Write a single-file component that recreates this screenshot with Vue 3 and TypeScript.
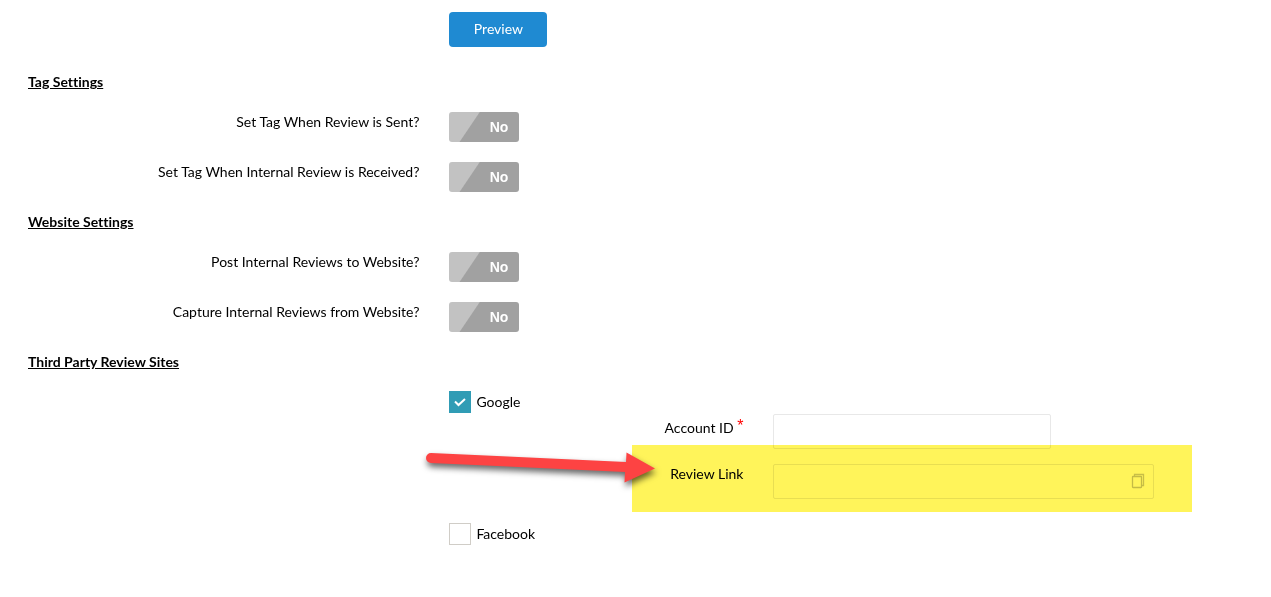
<script setup lang="ts">
import { reactive, ref } from 'vue'

interface ToggleRow {
  id: string
  label: string
  on: boolean
}

interface Section {
  title: string
  rows: ToggleRow[]
}

const sections = reactive<Section[]>([
  {
    title: 'Tag Settings',
    rows: [
      { id: 'tag-sent', label: 'Set Tag When Review is Sent?', on: false },
      { id: 'tag-received', label: 'Set Tag When Internal Review is Received?', on: false },
    ],
  },
  {
    title: 'Website Settings',
    rows: [
      { id: 'post-reviews', label: 'Post Internal Reviews to Website?', on: false },
      { id: 'capture-reviews', label: 'Capture Internal Reviews from Website?', on: false },
    ],
  },
])

const google = ref(true)
const facebook = ref(false)
const accountId = ref('')
const reviewLink = ref('')
</script>

<template>
  <form class="settings" @submit.prevent>
    <div class="row">
      <button type="button" class="preview">Preview</button>
    </div>

    <section v-for="section in sections" :key="section.title">
      <h2 class="heading">{{ section.title }}</h2>
      <div v-for="row in section.rows" :key="row.id" class="row">
        <label class="row-label" :for="row.id">{{ row.label }}</label>
        <span class="toggle" :class="{ on: row.on }">
          <input :id="row.id" v-model="row.on" type="checkbox" role="switch" />
          <span class="toggle-text" aria-hidden="true">{{ row.on ? 'Yes' : 'No' }}</span>
        </span>
      </div>
    </section>

    <section>
      <h2 class="heading">Third Party Review Sites</h2>
      <div class="sites">
        <label class="check">
          <span class="box">
            <input v-model="google" type="checkbox" />
            <svg v-if="google" viewBox="0 0 22 22" aria-hidden="true">
              <path d="M6 10.500l3.500 3.500L16 8" fill="none" stroke="#fff" stroke-width="2" />
            </svg>
          </span>
          Google
        </label>

        <div v-if="google" class="fields">
          <div class="field">
            <label class="field-label required" for="account">Account ID <sup>*</sup></label>
            <input id="account" v-model="accountId" class="text account" type="text" required />
          </div>
          <div class="field">
            <label class="field-label" for="link">Review Link</label>
            <div class="link-box">
              <input id="link" v-model="reviewLink" class="text" type="text" />
              <button type="button" class="copy" aria-label="Copy">
                <svg width="14" height="16" viewBox="0 0 14 16" aria-hidden="true">
                  <path d="M3.500 3V1.500H12.500V12.500H10.500" fill="none" stroke="#c8c8c8" stroke-width="1.300" />
                  <rect x="1.500" y="3.500" width="9" height="11" rx="0.500" fill="none" stroke="#c4c4c4" stroke-width="1.300" />
                </svg>
              </button>
            </div>
            <div class="highlight"></div>
            <svg class="arrow" width="240" height="50" viewBox="0 0 240 50" aria-hidden="true">
              <path
                d="M11 8L206 17L206.500 7.500L235 23.500L204.500 37.500L205 27L11 18A5 5 0 0 1 11 8Z"
                fill="#fd4343"
              />
            </svg>
          </div>
        </div>

        <label class="check">
          <span class="box">
            <input v-model="facebook" type="checkbox" />
            <svg v-if="facebook" viewBox="0 0 22 22" aria-hidden="true">
              <path d="M6 10.500l3.500 3.500L16 8" fill="none" stroke="#fff" stroke-width="2" />
            </svg>
          </span>
          Facebook
        </label>
      </div>
    </section>
  </form>
</template>

<style>
body {
  background: #fff;
}
</style>

<style scoped>
.settings {
  padding: 12px 0 52px;
  font-family: Lato, sans-serif;
  font-size: 14px;
  font-variant-ligatures: none;
  line-height: 20px;
  color: #000;
}

.row {
  display: grid;
  grid-template-columns: 33% 1fr;
  column-gap: 30px;
  align-items: start;
  margin-bottom: 20px;
}

.row-label {
  text-align: right;
}

.preview {
  grid-column: 2;
  justify-self: start;
  width: 98px;
  height: 35px;
  margin-bottom: 5px;
  padding: 0 0 2px;
  border: 0;
  border-radius: 4px;
  background: #1f8ad2;
  color: #fff;
  font: inherit;
}

.heading {
  margin: 0 28px 20px;
  font-size: 14px;
  font-weight: 700;
  text-decoration: underline;
}

.toggle {
  position: relative;
  display: block;
  width: 70px;
  height: 30px;
}

.toggle input {
  appearance: none;
  display: block;
  width: 100%;
  height: 100%;
  margin: 0;
  border-radius: 3px;
  background: linear-gradient(124deg, #c2c2c2 0 25px, #a1a1a1 26px);
}

.toggle.on input {
  background: #309cb5;
}

.toggle-text {
  position: absolute;
  inset: 0 11px 0 0;
  line-height: 30px;
  text-align: right;
  font-family: "Liberation Sans", sans-serif;
  font-weight: 700;
  color: #fff;
  pointer-events: none;
}

.sites {
  padding-left: calc(33% + 30px);
}

.check {
  display: flex;
  align-items: center;
  gap: 5px;
  width: fit-content;
  height: 22px;
  margin-top: -1px;
}

.box {
  display: grid;
  width: 22px;
  height: 22px;
}

.box > * {
  grid-area: 1 / 1;
  width: 22px;
  height: 22px;
  pointer-events: none;
}

.box input {
  appearance: none;
  box-sizing: border-box;
  margin: 0;
  border: 1px solid #d0cdc7;
  background: #fff;
}

.box input:checked {
  border-color: #309cb5;
  background: #309cb5;
}

.fields {
  display: grid;
  gap: 15px;
  padding: 1px 0 25px;
}

.field {
  position: relative;
  display: grid;
  grid-template-columns: 294px 1fr;
  column-gap: 30px;
  align-items: start;
}

.field-label {
  text-align: right;
}

.required {
  padding-top: 4px;
}

.required sup {
  line-height: 0;
  font-family: "Liberation Sans", sans-serif;
  font-size: 16px;
  vertical-align: 2px;
  color: #f00;
}

.text {
  box-sizing: border-box;
  display: block;
  width: 100%;
  height: 35px;
  padding: 0 10px;
  border: 1px solid #e8e8e8;
  border-radius: 2px;
  background: #fff;
  font: inherit;
  outline: none;
}

.account {
  max-width: 278px;
}

.link-box {
  position: relative;
  max-width: 381px;
}

.copy {
  position: absolute;
  top: 9px;
  right: 9px;
  display: flex;
  padding: 0;
  border: 0;
  background: none;
}

.highlight {
  position: absolute;
  left: 183px;
  top: -19px;
  width: 560px;
  height: 67px;
  background: #fff45a;
  mix-blend-mode: multiply;
  pointer-events: none;
}

.arrow {
  position: absolute;
  left: -29px;
  top: -19px;
  overflow: visible;
  filter: drop-shadow(1px 4px 3px rgba(0, 0, 0, 0.6));
  pointer-events: none;
}
</style>
